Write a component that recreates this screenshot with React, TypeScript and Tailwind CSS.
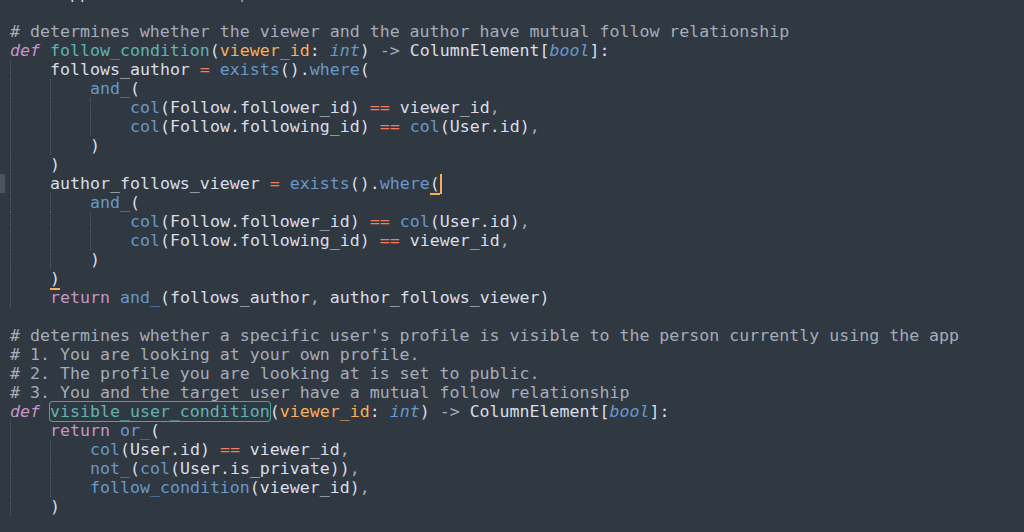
import React from 'react';

type Tok = [string, string];

// Mariana-ish palette
const W = 'text-[#d8dee9]';
const C = 'text-[#a6acb9]';
const G = 'text-[#a6acb9]';
const K = 'text-[#c695c6] italic';
const R = 'text-[#c695c6]';
const F = 'text-[#5fb4b4]';
const P = 'text-[#f9ae58]';
const T = 'text-[#6699cc] italic';
const O = 'text-[#f97b58]';
const B = 'text-[#6699cc]';

interface Line {
  indent: number;
  toks: Tok[];
  current?: boolean;
}

const defLine = (name: string, boxed: boolean): Tok[] => [
  ['def', K],
  [' ', W],
  [name, boxed ? `${F} boxed` : F],
  ['(', W],
  ['viewer_id', P],
  [': ', W],
  ['int', T],
  [') ', W],
  ['->', G],
  [' ColumnElement[', W],
  ['bool', T],
  [']:', W],
];

const lines: Line[] = [
  { indent: 0, toks: [['      pp', W], ['               ', W], ['p', R]] },
  { indent: 0, toks: [] },
  { indent: 0, toks: [['# determines whether the viewer and the author have mutual follow relationship', C]] },
  { indent: 0, toks: defLine('follow_condition', false) },
  { indent: 1, toks: [['follows_author ', W], ['=', O], [' ', W], ['exists', B], ['().', W], ['where', B], ['(', W]] },
  { indent: 2, toks: [['and_', B], ['(', W]] },
  { indent: 3, toks: [['col', B], ['(Follow.follower_id) ', W], ['==', O], [' viewer_id', W], [',', G]] },
  { indent: 3, toks: [['col', B], ['(Follow.following_id) ', W], ['==', O], [' ', W], ['col', B], ['(User.id)', W], [',', G]] },
  { indent: 2, toks: [[')', W]] },
  { indent: 1, toks: [[')', W]] },
  {
    indent: 1,
    current: true,
    toks: [['author_follows_viewer ', W], ['=', O], [' ', W], ['exists', B], ['().', W], ['where', B], ['(', `${W} match cursor`]],
  },
  { indent: 2, toks: [['and_', B], ['(', W]] },
  { indent: 3, toks: [['col', B], ['(Follow.follower_id) ', W], ['==', O], [' ', W], ['col', B], ['(User.id)', W], [',', G]] },
  { indent: 3, toks: [['col', B], ['(Follow.following_id) ', W], ['==', O], [' viewer_id', W], [',', G]] },
  { indent: 2, toks: [[')', W]] },
  { indent: 1, toks: [[')', `${W} match`]] },
  { indent: 1, toks: [['return', R], [' ', W], ['and_', B], ['(follows_author', W], [',', G], [' author_follows_viewer)', W]] },
  { indent: 0, toks: [] },
  { indent: 0, toks: [["# determines whether a specific user's profile is visible to the person currently using the app", C]] },
  { indent: 0, toks: [['# 1. You are looking at your own profile.', C]] },
  { indent: 0, toks: [['# 2. The profile you are looking at is set to public.', C]] },
  { indent: 0, toks: [['# 3. You and the target user have a mutual follow relationship', C]] },
  { indent: 0, toks: defLine('visible_user_condition', true) },
  { indent: 1, toks: [['return', R], [' ', W], ['or_', B], ['(', W]] },
  { indent: 2, toks: [['col', B], ['(User.id) ', W], ['==', O], [' viewer_id', W], [',', G]] },
  { indent: 2, toks: [['not_', B], ['(', W], ['col', B], ['(User.is_private))', W], [',', G]] },
  { indent: 2, toks: [['follow_condition', B], ['(viewer_id)', W], [',', G]] },
  { indent: 1, toks: [[')', W]] },
];

const Token: React.FC<{ tok: Tok }> = ({ tok }) => {
  const [text, cls] = tok;
  const boxed = cls.includes('boxed');
  const match = cls.includes('match');
  const cursor = cls.includes('cursor');
  const base = cls.replace(' boxed', '').replace(' match', '').replace(' cursor', '');
  return (
    <>
      <span
        className={
          base +
          (boxed ? ' rounded-[3px] ring-1 ring-[#4fa3a3]' : '') +
          (match ? ' border-b-2 border-[#f9ae58]' : '')
        }
      >
        {text}
      </span>
      {cursor && <span className="inline-block h-[20px] w-[2px] bg-[#f9ae58] align-top" />}
    </>
  );
};

const CodeLine: React.FC<{ line: Line }> = ({ line }) => (
  <div className="flex h-[19px] leading-[19px] whitespace-pre">
    <div className="flex w-[10px] shrink-0">
      {line.current && <div className="h-[19px] w-[5px] bg-[#4a545e]" />}
    </div>
    {Array.from({ length: line.indent }).map((_, i) => (
      <span key={i} className="inline-block h-[19px] w-[40px] shrink-0 border-l border-dotted border-[#56606b]" />
    ))}
    <div>
      {line.toks.map((t, i) => (
        <Token key={i} tok={t} />
      ))}
    </div>
  </div>
);

export default function App() {
  return (
    <div
      className="h-[532px] w-full overflow-hidden bg-[#303841] text-[16.6px]"
      style={{ fontFamily: '"DejaVu Sans Mono", "Liberation Mono", monospace' }}
    >
      <div className="-mt-[16.5px]">
        {lines.map((l, i) => (
          <CodeLine key={i} line={l} />
        ))}
      </div>
    </div>
  );
}
